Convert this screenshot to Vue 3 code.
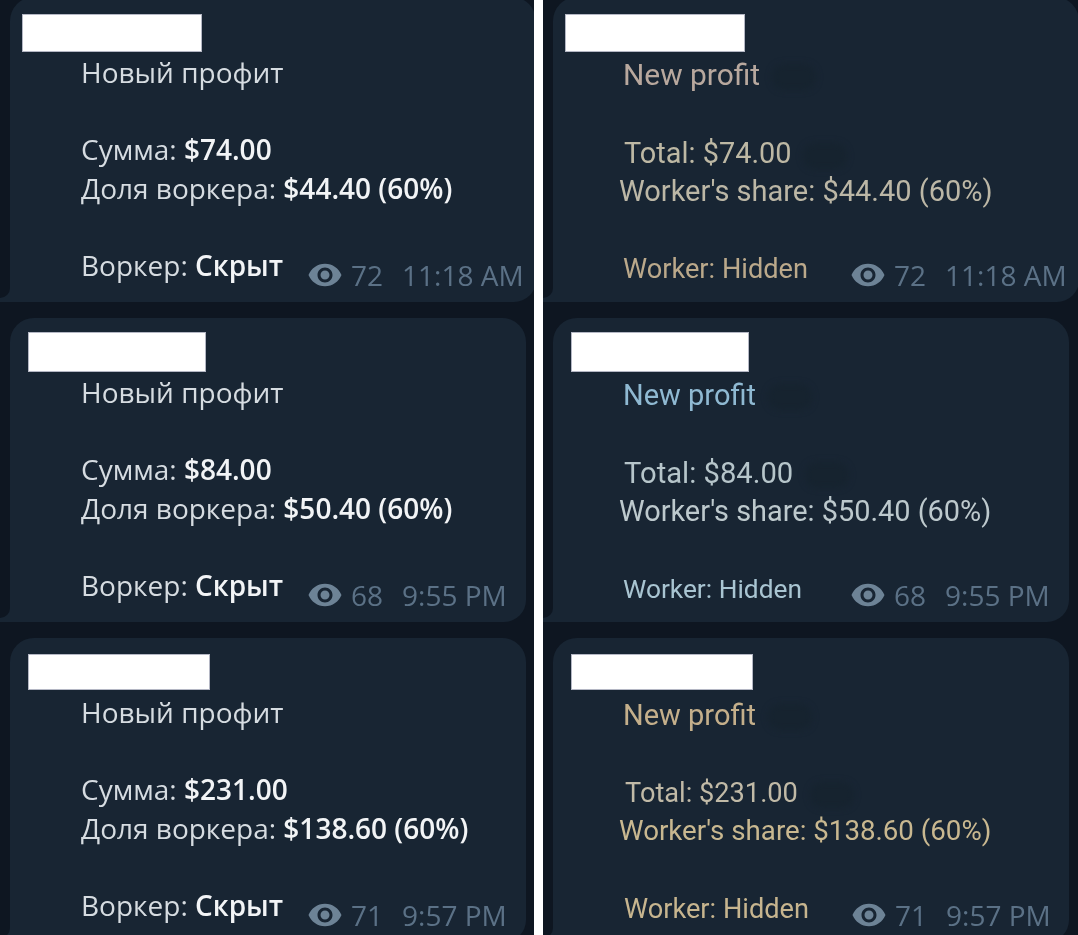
<template>
  <div class="page">
    <section class="col">
      <article
        v-for="(b, i) in ruPosts"
        :key="i"
        class="bubble"
        :class="{ first: i === 0 }"
      >
        <span class="tail"></span>
        <div class="redact" :style="boxStyle(b.box)"></div>
        <div class="body">
          <div class="line">Новый профит</div>
          <div class="line gap">Сумма: <b>{{ b.total }}</b></div>
          <div class="line">Доля воркера: <b>{{ b.share }}</b></div>
          <div class="last gap">
            <div class="line who">Воркер: <b>Скрыт</b></div>
            <div class="meta">
              <svg class="eye" viewBox="0 0 24 24" width="36" height="36"><path :d="eyePath" /></svg>
              <span class="views">{{ b.views }}</span>
              <span>{{ b.time }}</span>
            </div>
          </div>
        </div>
      </article>
    </section>

    <section class="col en">
      <article
        v-for="(b, i) in enPosts"
        :key="i"
        class="bubble"
        :class="{ first: i === 0 }"
      >
        <span class="tail"></span>
        <div class="redact" :style="boxStyle(b.box)"></div>
        <div class="body">
          <div class="line smudge" :style="lineStyle(b.lines[0])">New profit</div>
          <div class="line gap total smudge" :style="lineStyle(b.lines[1])">Total: {{ b.total }}</div>
          <div class="line" :style="lineStyle(b.lines[2])">Worker's share: {{ b.share }}</div>
          <div class="last gap">
            <div class="line who" :style="lineStyle(b.lines[3])">Worker: Hidden</div>
            <div class="meta">
              <svg class="eye" viewBox="0 0 24 24" width="36" height="36"><path :d="eyePath" /></svg>
              <span class="views">{{ b.views }}</span>
              <span>{{ b.time }}</span>
            </div>
          </div>
        </div>
      </article>
    </section>
  </div>
</template>

<script setup>
const eyePath =
  'M12 4.5C7 4.5 2.73 7.61 1 12c1.73 4.39 6 7.5 11 7.5s9.27-3.11 11-7.5c-1.73-4.39-6-7.5-11-7.5zM12 17c-2.76 0-5-2.24-5-5s2.24-5 5-5 5 2.24 5 5-2.24 5-5 5zm0-8c-1.66 0-3 1.34-3 3s1.34 3 3 3 3-1.34 3-3-1.34-3-3-3z'

const ruPosts = [
  { total: '$74.00', share: '$44.40 (60%)', views: 72, time: '11:18 AM', box: [12, 17, 180, 38] },
  { total: '$84.00', share: '$50.40 (60%)', views: 68, time: '9:55 PM', box: [18, 14, 178, 40] },
  { total: '$231.00', share: '$138.60 (60%)', views: 71, time: '9:57 PM', box: [18, 16, 182, 36] }
]

// each translated line was pasted on separately, so indent, size and tint differ
const enPosts = [
  {
    total: '$74.00',
    share: '$44.40 (60%)',
    views: 72,
    time: '11:18 AM',
    box: [12, 17, 180, 38],
    lines: [
      { x: -1, size: 29.9, color: '#b8a89e' },
      { x: 0, size: 28.9, color: '#bdb8a4' },
      { x: -5, size: 29, color: '#bcb7a6' },
      { x: -1, size: 27.2, color: '#bba98b' }
    ]
  },
  {
    total: '$84.00',
    share: '$50.40 (60%)',
    views: 68,
    time: '9:55 PM',
    box: [18, 14, 178, 40],
    lines: [
      { x: -1, size: 29, color: '#8fb9d2' },
      { x: 0, size: 29.2, color: '#b6c5ca' },
      { x: -5, size: 28.9, color: '#bdc9cd' },
      { x: -1, size: 26.3, color: '#a9c5d2' }
    ]
  },
  {
    total: '$231.00',
    share: '$138.60 (60%)',
    views: 71,
    time: '9:57 PM',
    box: [18, 16, 182, 36],
    lines: [
      { x: -1, size: 29, color: '#c4af8b' },
      { x: 1, size: 27.2, color: '#c1baa7' },
      { x: -5, size: 27.7, color: '#c9b890' },
      { x: 0, size: 27.2, color: '#c7b58f' }
    ]
  }
]

function boxStyle([left, top, width, height]) {
  return { left: left + 'px', top: top + 'px', width: width + 'px', height: height + 'px' }
}

function lineStyle(l) {
  return { marginLeft: l.x + 'px', fontSize: l.size + 'px', color: l.color }
}
</script>

<style scoped>
.page {
  display: flex;
  gap: 9px;
  width: 1078px;
  height: 935px;
  overflow: hidden;
  background: #fff;
}

.col {
  flex: none;
  width: 534px;
  height: 935px;
  overflow: hidden;
  box-sizing: border-box;
  padding-left: 10px;
  display: flex;
  flex-direction: column;
  gap: 16px;
  background: #0e1621;
}

.col.en {
  width: 535px;
}

.bubble {
  position: relative;
  flex: none;
  width: 516px;
  height: 304px;
  box-sizing: border-box;
  padding: 53px 0 0 71px;
  border-radius: 24px 24px 22px 0;
  background: #182533;
}

.bubble.first {
  width: 526px;
  height: 305px;
  margin-top: -3px;
  padding-top: 54px;
}

/* the little foot telegram draws at the bottom left of a bubble */
.tail {
  position: absolute;
  left: -10px;
  bottom: 0;
  width: 10px;
  height: 24px;
  background: #182533;
}

.tail::before {
  content: "";
  display: block;
  width: 10px;
  height: 20px;
  background: #0e1621;
  border-bottom-right-radius: 12px;
}

.redact {
  position: absolute;
  box-sizing: border-box;
  background: #fff;
  border: 1px solid #b4b7c4;
}

.body {
  padding-top: 2px;
  font-family: "Open Sans", "Noto Sans", sans-serif;
  font-size: 28px;
  line-height: 38.6px;
  color: #d6dce1;
  filter: blur(0.5px);
}

.body b {
  font-weight: 600;
  color: #f2f4f6;
}

.en .body {
  padding-top: 5px;
  font-family: Roboto, "Liberation Sans", sans-serif;
}

.gap {
  margin-top: 38.6px;
}

.en .gap {
  margin-top: 39.6px;
}

.line {
  height: 38.6px;
  white-space: nowrap;
}

.en .total {
  height: 37.6px;
}

/* the faint smudge the translate overlay leaves behind its text */
.smudge::after {
  content: "";
  display: inline-block;
  width: 44px;
  height: 26px;
  margin-left: 12px;
  vertical-align: middle;
  border-radius: 13px;
  background: #16232f;
  filter: blur(3px);
}

.last {
  display: flex;
  align-items: flex-start;
}

.who {
  flex: none;
  width: 228px;
}

.en .who {
  margin-right: 1px;
}

.meta {
  flex: none;
  display: flex;
  align-items: center;
  margin-top: 10px;
  margin-left: -2px;
  font-family: "Open Sans", "Noto Sans", sans-serif;
  font-size: 28px;
  line-height: 38.6px;
  color: #5b7186;
  white-space: nowrap;
}

.en .meta {
  margin-top: 6px;
}

.eye {
  margin-right: 8px;
  fill: #6d8396;
}

.views {
  margin-right: 19px;
}
</style>

<style>
html,
body {
  margin: 0;
  background: #fff;
}
</style>
